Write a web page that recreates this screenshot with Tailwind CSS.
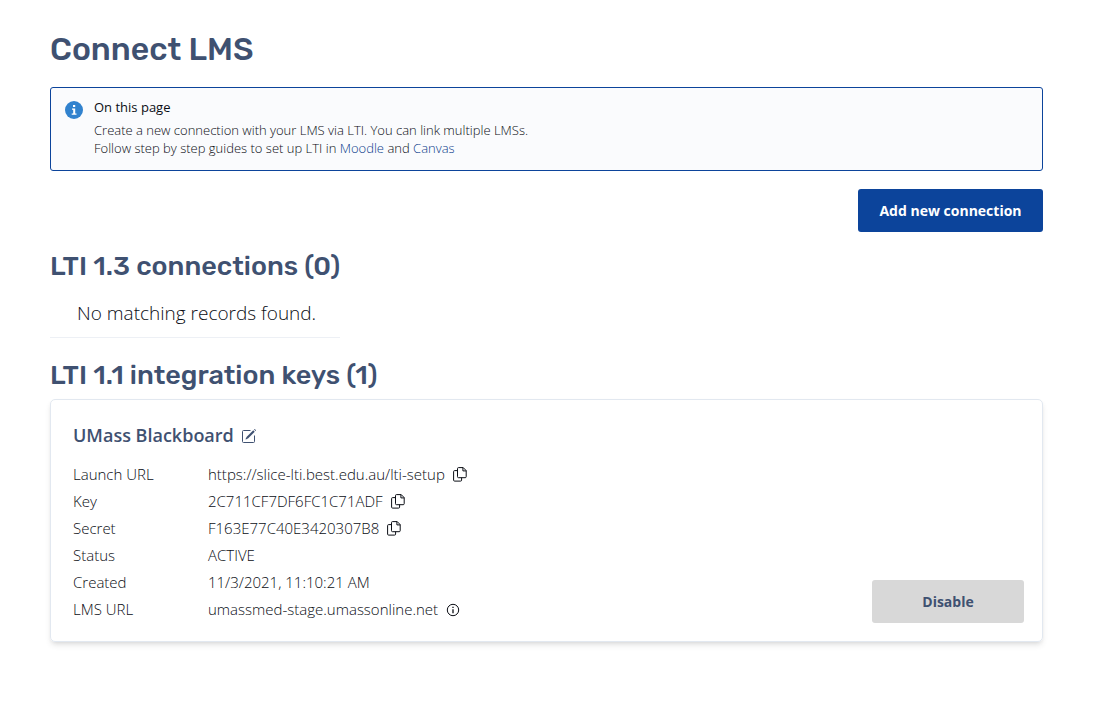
<!DOCTYPE html>
<html lang="en">
<head>
<meta charset="utf-8">
<title>Connect LMS</title>
<script src="https://cdn.jsdelivr.net/npm/@tailwindcss/browser@4"></script>
</head>
<body class="bg-white font-['Open_Sans',sans-serif] text-[#0a0d14]">
<svg class="hidden">
  <symbol id="copy" viewBox="0 0 14 15" fill="none" stroke="currentColor">
    <path d="M5.500.600h4.700l3 3v6.100a1 1 0 0 1-1 1h-6.700a1 1 0 0 1-1-1v-8.100a1 1 0 0 1 1-1z"/>
    <path d="M9.900.600v3.300h3.300"/>
    <path d="M4.500 3.600h-2.900a1 1 0 0 0-1 1v8.500a1 1 0 0 0 1 1h6a1 1 0 0 0 1-1v-2.400"/>
  </symbol>
</svg>
<main class="pl-[50px] pr-[54px] pt-7 pb-10">
  <h1 class="font-[Rubik,Roboto,sans-serif] font-medium text-[32px] leading-[42px] text-[#3f5171]">Connect LMS</h1>

  <section class="mt-[17px] flex gap-[11px] rounded-[3px] border border-[#0c449b] bg-[#fafbfd] pl-[14px] pr-4 pt-[10px] pb-[13px]">
    <svg class="mt-[3px] size-[18px] shrink-0" viewBox="0 0 18 18" aria-hidden="true">
      <circle cx="9" cy="9" r="9" fill="#3182ce"/>
      <path d="M8 4h2.200v2H8zM7 7.500h3.200v5H11.500v1.300H6.700v-1.300H8.200V8.800H7z" fill="#fff"/>
    </svg>
    <div class="text-[13px] leading-[18px]">
      <h2 class="mb-[5px] font-medium">On this page</h2>
      <p class="font-[340]">Create a new connection with your LMS via LTI. You can link multiple LMSs.</p>
      <p class="font-[340]">Follow step by step guides to set up LTI in <a href="#" class="text-[#0c3c8b]">Moodle</a> and <a href="#" class="text-[#0c3c8b]">Canvas</a></p>
    </div>
  </section>

  <div class="mt-[18px] flex justify-end">
    <button type="button" class="h-[43px] w-[185px] rounded-[3px] bg-[#0c449b] text-sm font-bold text-white">Add new connection</button>
  </div>

  <section class="mt-[18px] w-fit">
    <h2 class="font-[Rubik,Roboto,sans-serif] font-medium text-[27px] leading-8 text-[#3f5171]">LTI 1.3 connections (0)</h2>
    <p class="mt-2 border-b border-[#edf0f5] pl-[27px] pt-[9px] pb-[10px] text-[19px] leading-7 font-light">No matching records found.</p>
  </section>

  <section class="mt-[21px]">
    <h2 class="font-[Rubik,Roboto,sans-serif] font-medium text-[27px] leading-8 text-[#3f5171]">LTI 1.1 integration keys (1)</h2>
    <article class="mt-2 flex items-end justify-between rounded-[5px] border border-[#e2e8f0] pl-[22px] pr-[18px] pt-[22px] pb-[18px] shadow-md">
      <div>
        <h3 class="flex items-center gap-2 text-lg leading-[27px] font-semibold text-[#3f5171]">UMass Blackboard
          <button type="button" aria-label="Edit name"><svg class="size-[14px]" viewBox="0 0 14 14" fill="none" stroke="currentColor">
            <path d="M8.500 1.500H1.500a1 1 0 0 0-1 1v10a1 1 0 0 0 1 1h10a1 1 0 0 0 1-1V6.500"/>
            <path d="M5 9l7-7" stroke-width="2.200"/><path d="M3.500 10.500l.7-2.300 1.600 1.600z" fill="currentColor" stroke="none"/><path d="M12.800 1.200l.6-.6" stroke-width="2"/>
          </svg></button>
        </h3>
        <dl class="mt-3 grid grid-cols-[135px_auto] text-[15px] leading-[27px] font-light">
          <dt>Launch URL</dt><dd class="flex items-center gap-2">https://slice-lti.best.edu.au/lti-setup <button type="button" aria-label="Copy launch URL"><svg class="h-[15px] w-[14px]"><use href="#copy"/></svg></button></dd>
          <dt>Key</dt><dd class="flex items-center gap-2">2C711CF7DF6FC1C71ADF <button type="button" aria-label="Copy key"><svg class="h-[15px] w-[14px]"><use href="#copy"/></svg></button></dd>
          <dt>Secret</dt><dd class="flex items-center gap-2">F163E77C40E3420307B8 <button type="button" aria-label="Copy secret"><svg class="h-[15px] w-[14px]"><use href="#copy"/></svg></button></dd>
          <dt>Status</dt><dd>ACTIVE</dd>
          <dt>Created</dt><dd>11/3/2021, 11:10:21 AM</dd>
          <dt>LMS URL</dt><dd class="flex items-center gap-2">umassmed-stage.umassonline.net <button type="button" aria-label="About the LMS URL"><svg class="size-[14px]" viewBox="0 0 14 14" fill="none" stroke="currentColor"><circle cx="7" cy="7" r="5.700"/><path d="M7 6.200v4" stroke-width="1.300"/><path d="M7 3.800v1.300" stroke-width="1.300"/></svg></button></dd>
        </dl>
      </div>
      <button type="button" class="h-[43px] w-[152px] rounded-[3px] bg-[#d8d8d8] text-sm font-bold text-[#3f5171]">Disable</button>
    </article>
  </section>
</main>
</body>
</html>
